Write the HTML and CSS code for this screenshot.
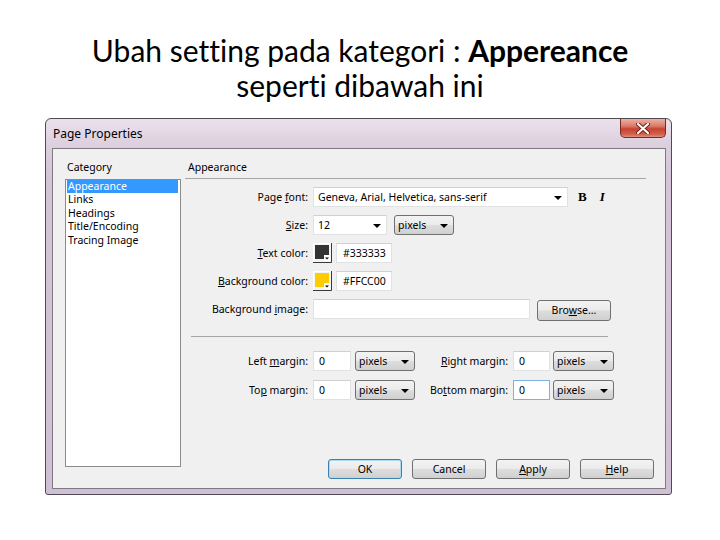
FILE: index.html
```html
<!DOCTYPE html>
<html lang="id">
<head>
  <meta charset="UTF-8">
  <title>Page Properties - Appearance</title>
  <link rel="stylesheet" href="styles.css">
</head>
<body>
  <!-- Slide title -->
  <h1 class="slide-title">Ubah setting pada kategori : <b>Appereance</b><br>seperti dibawah ini</h1>

  <!-- Dialog screenshot -->
  <div class="dialog">
    <div class="titlebar">
      <span class="title">Page Properties</span>
      <span class="close-btn">
        <svg width="14" height="11" viewBox="0 0 14 11">
          <path d="M2 1 L12 10 M12 1 L2 10" stroke="#6b1d14" stroke-width="4" stroke-linecap="round"/>
          <path d="M2 1 L12 10 M12 1 L2 10" stroke="#fff" stroke-width="2.2" stroke-linecap="round"/>
        </svg>
      </span>
    </div>

    <div class="panel">
      <div class="category">
        <div class="col-head">Category</div>
        <ul class="cat-list">
          <li class="selected">Appearance</li>
          <li>Links</li>
          <li>Headings</li>
          <li>Title/Encoding</li>
          <li>Tracing Image</li>
        </ul>
      </div>

      <div class="settings">
        <div class="col-head section-head">Appearance</div>

        <div class="row first">
          <span class="lbl">Page <u>f</u>ont:</span>
          <div class="field font-combo">Geneva, Arial, Helvetica, sans-serif<span class="arrow"></span></div>
          <span class="style-btn bold">B</span>
          <span class="style-btn italic">I</span>
        </div>

        <div class="row">
          <span class="lbl"><u>S</u>ize:</span>
          <div class="field size-combo">12<span class="arrow"></span></div>
          <div class="select unit-select">pixels<span class="arrow"></span></div>
        </div>

        <div class="row">
          <span class="lbl"><u>T</u>ext color:</span>
          <svg class="swatch" width="19" height="20" viewBox="0 0 19 20">
            <rect x="0" y="0" width="19" height="20" fill="#f4f4f4"/>
            <path d="M0.5 19.5 V0.5 H18.5" stroke="#ffffff" fill="none"/>
            <path d="M18.5 0 V19.5 H0" stroke="#3a3a3a" fill="none"/>
            <rect x="2" y="2" width="14" height="14" fill="#333333"/>
            <rect x="11" y="12" width="6" height="6" fill="#ffffff"/>
            <path d="M12 14.5 H16 L14 16.5 Z" fill="#000"/>
          </svg>
          <div class="field hex-input">#333333</div>
        </div>

        <div class="row">
          <span class="lbl"><u>B</u>ackground color:</span>
          <svg class="swatch" width="19" height="20" viewBox="0 0 19 20">
            <rect x="0" y="0" width="19" height="20" fill="#f4f4f4"/>
            <path d="M0.5 19.5 V0.5 H18.5" stroke="#ffffff" fill="none"/>
            <path d="M18.5 0 V19.5 H0" stroke="#3a3a3a" fill="none"/>
            <rect x="2" y="2" width="14" height="14" fill="#ffcc00"/>
            <rect x="11" y="12" width="6" height="6" fill="#ffffff"/>
            <path d="M12 14.5 H16 L14 16.5 Z" fill="#000"/>
          </svg>
          <div class="field hex-input">#FFCC00</div>
        </div>

        <div class="row">
          <span class="lbl">Background <u>i</u>mage:</span>
          <div class="field path-input"></div>
          <div class="button browse-btn">Bro<u>w</u>se...</div>
        </div>

        <div class="sep"></div>

        <div class="row margins">
          <span class="lbl">Left <u>m</u>argin:</span>
          <div class="field num-input">0</div>
          <div class="select margin-select">pixels<span class="arrow"></span></div>
          <span class="lbl lbl2"><u>R</u>ight margin:</span>
          <div class="field num-input right-num">0</div>
          <div class="select margin-select right-select">pixels<span class="arrow"></span></div>
        </div>

        <div class="row margins second">
          <span class="lbl">To<u>p</u> margin:</span>
          <div class="field num-input">0</div>
          <div class="select margin-select">pixels<span class="arrow"></span></div>
          <span class="lbl lbl2">Bo<u>t</u>tom margin:</span>
          <div class="field num-input right-num focused">0</div>
          <div class="select margin-select right-select">pixels<span class="arrow"></span></div>
        </div>

        <div class="buttons">
          <div class="button default-btn">OK</div>
          <div class="button">Cancel</div>
          <div class="button"><u>A</u>pply</div>
          <div class="button"><u>H</u>elp</div>
        </div>
      </div>
    </div>
  </div>
</body>
</html>
```

FILE: styles.css
```css
body {
  margin: 0;
  background: #fff;
  font-family: "Noto Sans", "Liberation Sans", sans-serif;
}

.slide-title {
  margin: 0;
  padding-top: 33px;
  text-align: center;
  font-family: Lato, "Liberation Sans", sans-serif;
  font-size: 30px;
  font-weight: normal;
  font-variant-ligatures: none;
  line-height: 35px;
  color: #000;
}

/* Window frame */
.dialog {
  width: 627px;
  box-sizing: border-box;
  margin: 15px 0 0 45px;
  padding: 0 5px 5px 6px;
  border: 1px solid #4f4b52;
  border-radius: 6px 6px 3px 3px;
  background: linear-gradient(#ebe1ec, #dbcedd 28px, #d3c4d7 60px, #d0c0d5);
  font-size: 10.5px;
  color: #000;
}

.titlebar {
  display: flex;
  height: 29px;
}

.title {
  padding: 7px 0 0 1px;
  font-size: 12px;
  line-height: 16px;
}

.close-btn {
  margin-left: auto;
  width: 46px;
  height: 19px;
  box-sizing: border-box;
  display: flex;
  align-items: center;
  justify-content: center;
  border: 1px solid #7a2b22;
  border-top: none;
  border-radius: 0 0 5px 5px;
  background: linear-gradient(#eab0a4, #dc7a68 40%, #c8412f 55%, #d0624f 85%, #e0907e);
}

/* Content panel */
.panel {
  display: flex;
  height: 341px;
  box-sizing: border-box;
  padding: 11px 11px 9px 12px;
  border: 1px solid #7d7a80;
  background: #f0f0f0;
}

.col-head {
  line-height: 14px;
  padding-left: 2px;
}

.category {
  width: 116px;
  display: flex;
  flex-direction: column;
  padding-bottom: 12px;
}

.cat-list {
  flex: 1;
  margin: 5px 0 0;
  padding: 0;
  list-style: none;
  background: #fff;
  border: 1px solid #8b8b8b;
}

.cat-list li {
  margin: 0 2px 0 1px;
  padding-left: 1px;
  line-height: 13.4px;
}

.cat-list li.selected {
  background: #3399ff;
  color: #fff;
}

.settings {
  flex: 1;
  margin-left: 4px;
  display: flex;
  flex-direction: column;
}

.section-head {
  padding: 0 0 4px 3px;
  margin-right: 8px;
  border-bottom: 1px solid #a5a5a5;
}

/* Form rows */
.row {
  display: flex;
  align-items: center;
  height: 20px;
  margin-top: 8px;
}

.row.margins {
  margin-top: 14px;
}

.row.margins.second {
  margin-top: 9px;
}

.lbl {
  width: 123px;
  flex-shrink: 0;
  margin-right: 5px;
  text-align: right;
}

.lbl2 {
  width: 88px;
  margin-left: 5px;
}

.field {
  position: relative;
  height: 20px;
  box-sizing: border-box;
  padding-left: 4px;
  line-height: 18px;
  background: #fff;
  border: 1px solid #e1e1e1;
  border-top-color: #d0d0d0;
  white-space: nowrap;
}

.arrow {
  position: absolute;
  right: 5px;
  top: 8px;
  width: 0;
  height: 0;
  border-left: 4px solid transparent;
  border-right: 4px solid transparent;
  border-top: 4px solid #000;
}

.font-combo {
  width: 255px;
}

.size-combo {
  width: 74px;
}

.style-btn {
  font-family: "Liberation Serif", serif;
  font-weight: bold;
  font-size: 13px;
}

.style-btn.bold {
  margin-left: 10px;
}

.style-btn.italic {
  margin-left: 13px;
  font-style: italic;
}

.select,
.button {
  position: relative;
  height: 20px;
  box-sizing: border-box;
  border: 1px solid #707070;
  border-radius: 3px;
  background: linear-gradient(#f3f3f3, #ebebeb 48%, #dddddd 52%, #d0d0d0);
  line-height: 18px;
}

.select {
  padding-left: 3px;
}

.unit-select {
  width: 60px;
  margin-left: 7px;
}

.swatch {
  display: block;
}

.hex-input {
  width: 56px;
  margin-left: 4px;
  padding-left: 6px;
}

.path-input {
  width: 217px;
}

.button {
  width: 74px;
  text-align: center;
}

.browse-btn {
  margin-left: 7px;
  height: 21px;
  margin-top: 2px;
}

.sep {
  margin: 17px 46px 0 6px;
  border-top: 1px solid #a5a5a5;
}

.num-input {
  width: 38px;
  padding-left: 5px;
}

.margin-select {
  width: 60px;
  margin-left: 4px;
}

.right-num {
  width: 37px;
}

.right-select {
  width: 61px;
  margin-left: 3px;
}

.focused {
  border-color: #7fb2e0;
}

.buttons {
  margin-top: auto;
  display: flex;
  justify-content: flex-end;
  gap: 10px;
}

.default-btn {
  border-color: #3c7fb1;
  box-shadow: inset 0 0 0 1px #a9dcf3;
}
```
